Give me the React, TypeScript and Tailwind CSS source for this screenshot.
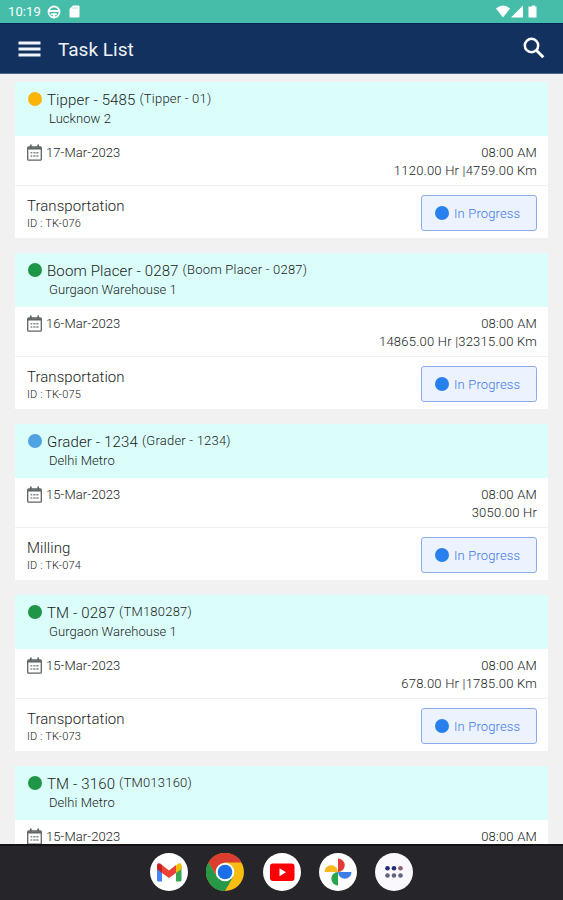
import React from "react";

type Task = {
  dot: string;
  name: string;
  alias: string;
  site: string;
  date: string;
  reading?: string;
  kind?: string;
  id?: string;
};

const tasks: Task[] = [
  { dot: "bg-[#fbb408]", name: "Tipper - 5485", alias: "(Tipper - 01)", site: "Lucknow 2", date: "17-Mar-2023", reading: "1120.00 Hr |4759.00 Km", kind: "Transportation", id: "TK-076" },
  { dot: "bg-[#1f9647]", name: "Boom Placer - 0287", alias: "(Boom Placer - 0287)", site: "Gurgaon Warehouse 1", date: "16-Mar-2023", reading: "14865.00 Hr |32315.00 Km", kind: "Transportation", id: "TK-075" },
  { dot: "bg-[#4fa3e3]", name: "Grader - 1234", alias: "(Grader - 1234)", site: "Delhi Metro", date: "15-Mar-2023", reading: "3050.00 Hr", kind: "Milling", id: "TK-074" },
  { dot: "bg-[#1f9647]", name: "TM - 0287", alias: "(TM180287)", site: "Gurgaon Warehouse 1", date: "15-Mar-2023", reading: "678.00 Hr |1785.00 Km", kind: "Transportation", id: "TK-073" },
  { dot: "bg-[#1f9647]", name: "TM - 3160", alias: "(TM013160)", site: "Delhi Metro", date: "15-Mar-2023" },
];

function CalendarIcon() {
  return (
    <svg className="mb-[2px] h-[17px] w-[15px] shrink-0" viewBox="0 0 15 17" fill="none" stroke="#5f6464">
      <rect x="0.7" y="3" width="13.6" height="13.2" rx="1" strokeWidth="1.300" />
      <path d="M0.8 4.500h13.400" strokeWidth="2" />
      <path d="M3.800 0.500v3.500M11.200 0.500v3.500" strokeWidth="1.700" />
      <path d="M3.500 8.800h1.800M6.300 8.800h2.200M9.300 8.800h2.200M3.500 12h1.800M6.300 12h2.200M9.300 12h2.200" strokeWidth="1.600" stroke="#858989" />
    </svg>
  );
}

function TaskCard({ task }: { task: Task }) {
  return (
    <article className="h-[156px] shrink-0 bg-white font-light text-[#181c1c]">
      <div className="h-[54px] bg-[#dcfefb] pl-[13px] pt-[8px]">
        <div className="flex h-5 items-center">
          <span className={`mb-[3px] mr-[5px] size-[14px] shrink-0 rounded-full ${task.dot}`} />
          <span className="whitespace-pre text-[15px] leading-5 tracking-[0.14px]">{task.name}</span>
          <span className="mb-[2px] ml-1 whitespace-pre text-[13px] leading-4 tracking-[0.22px]">{task.alias}</span>
        </div>
        <div className="pl-[21px] text-[13px] leading-[18px] tracking-[0.06px]">{task.site}</div>
      </div>
      <div className="flex h-[50px] justify-between border-b border-[#f0f0f0] pl-3 pr-[11px] pt-2">
        <div className="flex h-[18px] items-center gap-1">
          <CalendarIcon />
          <span className="text-[13px] leading-[18px] tracking-[0.1px]">{task.date}</span>
        </div>
        <div className="text-right text-[13px] leading-[18px] tracking-[0.22px]">
          <div>08:00 AM</div>
          {task.reading && <div>{task.reading}</div>}
        </div>
      </div>
      {task.id && (
        <div className="flex h-[52px] justify-between pl-3 pr-[11px] pt-[9px]">
          <div className="pt-px">
            <div className="text-[15px] leading-5 tracking-[0.05px]">{task.kind}</div>
            <div className="text-[11px] leading-4 tracking-[0.15px]">ID : {task.id}</div>
          </div>
          <div className="flex h-9 w-[116px] items-center rounded-[3px] border border-[#8cabed] bg-[#ecf3fe] pl-[13px]">
            <span className="mr-[5px] size-[14px] rounded-full bg-[#2880ee]" />
            <span className="pt-px text-[13px] tracking-[0.15px] text-[#3d78e8]">In Progress</span>
          </div>
        </div>
      )}
    </article>
  );
}

function StatusBar() {
  return (
    <div className="flex h-[23px] shrink-0 items-center bg-[#46bda9] pl-2 pr-[24px] text-white">
      <span className="pt-px text-[13px] leading-[22px] tracking-[0.1px]">10:19</span>
      <svg className="ml-[6px] size-[14px]" viewBox="0 0 14 14" fill="none" stroke="white">
        <circle cx="7" cy="7" r="5.5" strokeWidth="1.8" />
        <path d="M2 6h10M4.3 9.2h5.4M6 11h2" strokeWidth="1.8" />
      </svg>
      <svg className="ml-[8px] h-[13px] w-[11px]" viewBox="0 0 11 13">
        <path d="M4 .5h5.5q1 0 1 1v10q0 1-1 1h-8q-1 0-1-1V4z" fill="white" />
        <path d="M4 2v2M6 2v2M8 2v2" stroke="#9bd9cf" strokeWidth=".8" />
      </svg>
      <svg className="ml-auto h-[13px] w-[43px]" viewBox="0 0 43 13" fill="white">
        <path d="M0 3.5Q7-2.5 14 3.5L7 12.5z" />
        <path d="M27 .5v12H15z" />
        <path d="M34.500 1.500h1.500V.5h3v1h1.500v11h-8v-11z" />
      </svg>
    </div>
  );
}

function Dock() {
  return (
    <nav className="flex h-14 shrink-0 justify-center gap-[18.25px] border-t-2 border-[#141417] bg-[#25252a] pt-[7px]">
      <svg className="size-[38px]" viewBox="0 0 38 38">
        <circle cx="19" cy="19" r="19" fill="#fff" />
        <path d="M7 12v15q0 1.500 1.500 1.500H12V14z" fill="#4285f4" />
        <path d="M26 14v14.500h4q1.500 0 1.500-1.500V12z" fill="#34a853" />
        <path d="M26 12.500l2.300-2q3.200-1 3.200 2V16L26 20z" fill="#fbbc04" />
        <path d="M7 16v-3.500q0-3 3.200-2L12 12v8z" fill="#c5221f" />
        <path d="M12 12l7 5.500 7-5.500v8l-7 5-7-5z" fill="#ea4335" />
      </svg>
      <svg className="size-[38px]" viewBox="0 0 38 38">
        <circle cx="19" cy="19" r="19" fill="#f9bd12" />
        <path d="M2.500 9.500A19 19 0 0 1 35.500 9.500H19L11 23.500z" fill="#db3d30" />
        <path d="M2.500 9.500A19 19 0 0 0 19 38L27.200 23.700H11z" fill="#279847" />
        <circle cx="19" cy="19" r="9.300" fill="#fff" />
        <circle cx="19" cy="19" r="7.300" fill="#1b70e8" />
      </svg>
      <svg className="size-[38px]" viewBox="0 0 38 38">
        <circle cx="19" cy="19" r="19" fill="#fff" />
        <rect x="7" y="10.500" width="24.500" height="17.500" rx="3" fill="#fb0007" />
        <path d="M16.500 15.200l6.500 4-6.500 4z" fill="#fff" />
      </svg>
      <svg className="size-[38px]" viewBox="0 0 38 38">
        <circle cx="19" cy="19" r="19" fill="#fff" />
        <path d="M19 5.500a6.700 6.700 0 0 1 0 13.400z" fill="#e43c36" />
        <path d="M32.500 19a6.700 6.700 0 0 1-13.400 0z" fill="#3c7ee9" />
        <path d="M19 32.500a6.700 6.700 0 0 1 0-13.400z" fill="#2ba44e" />
        <path d="M5.500 19a6.700 6.700 0 0 1 13.400 0z" fill="#f7b91d" />
      </svg>
      <svg className="size-[38px]" viewBox="0 0 38 38">
        <circle cx="19" cy="19" r="19" fill="#faf8fd" />
        <g fill="#252c76">
          <circle cx="12.500" cy="15.300" r="2.300" />
          <circle cx="19" cy="15.300" r="2.300" />
        </g>
        <circle cx="25.500" cy="15.300" r="2.300" fill="#8d6074" />
        <g fill="#63647c">
          <circle cx="12.500" cy="22.500" r="2.300" />
          <circle cx="19" cy="22.500" r="2.300" />
          <circle cx="25.500" cy="22.500" r="2.300" />
        </g>
      </svg>
    </nav>
  );
}

export default function App() {
  return (
    <div className="flex h-[900px] w-[563px] flex-col overflow-hidden bg-[#f1f1f1] font-[Roboto,sans-serif]">
      <StatusBar />
      <header className="flex h-[51px] shrink-0 items-center border-b border-t border-b-[#526583] border-t-[#06265a] bg-[#13315f] pl-[18px] pr-[18px]">
        <svg className="h-4 w-[23px]" viewBox="0 0 23 16" stroke="#f1f4fa" strokeWidth="2.800">
          <path d="M.5 2h22M.5 8h22M.5 14h22" />
        </svg>
        <h1 className="ml-[17px] pt-[2px] text-[19px] leading-6 text-[#eef1f7]">Task List</h1>
        <svg className="mb-[2px] ml-auto size-[22px]" viewBox="0 0 22 22" fill="none" stroke="white">
          <circle cx="8.500" cy="8.500" r="6.700" strokeWidth="2.500" />
          <path d="M13.300 13.300l7 7" strokeWidth="3" />
        </svg>
      </header>
      <main className="flex min-h-0 flex-1 flex-col gap-[15px] overflow-hidden px-[15px] pt-2">
        {tasks.map((task) => (
          <TaskCard key={task.date + task.name} task={task} />
        ))}
      </main>
      <Dock />
    </div>
  );
}
